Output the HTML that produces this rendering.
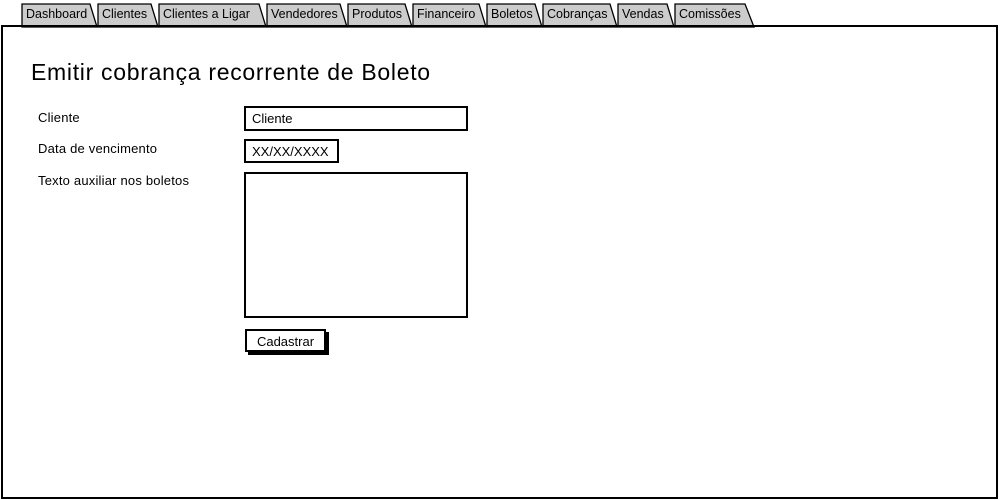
<!DOCTYPE html>
<html><head><meta charset="utf-8"><style>
body{margin:0;width:1000px;height:500px;background:#fff;position:relative;overflow:hidden;font-family:"Liberation Sans",sans-serif;color:#000}
.a{position:absolute}
.lbl{font-size:13px;letter-spacing:0.2px}
.box{border:2px solid #000;box-sizing:border-box;background:#fff;font-size:13px}
</style></head><body>
<svg class="a" style="left:0;top:0" width="1000" height="500">
<rect x="2" y="26" width="995" height="472" fill="#fff" stroke="#000" stroke-width="2"/>
<g fill="#ccc" stroke="#000" stroke-width="1.3">
<path d="M22 27V4H90L97 27Z"/>
<path d="M98 27V4H151L158 27Z"/>
<path d="M159 27V4H259L266 27Z"/>
<path d="M267 27V4H340L347 27Z"/>
<path d="M348 27V4H405L412 27Z"/>
<path d="M413 27V4H479L486 27Z"/>
<path d="M487 27V4H535L542 27Z"/>
<path d="M543 27V4H610L617 27Z"/>
<path d="M618 27V4H667L674 27Z"/>
<path d="M675 27V4H745L754 27Z"/>
</g>
<line x1="2" y1="26" x2="998" y2="26" stroke="#000" stroke-width="2"/>
<g font-family="Liberation Sans" font-size="12.5">
<text x="26" y="18">Dashboard</text>
<text x="102" y="18">Clientes</text>
<text x="163" y="18">Clientes a Ligar</text>
<text x="271" y="18">Vendedores</text>
<text x="352" y="18">Produtos</text>
<text x="417" y="18">Financeiro</text>
<text x="491" y="18">Boletos</text>
<text x="547" y="18">Cobranças</text>
<text x="622" y="18">Vendas</text>
<text x="679" y="18">Comissões</text>
</g>
</svg>
<div class="a" style="left:31px;top:59px;font-size:23px;letter-spacing:0.7px">Emitir cobrança recorrente de Boleto</div>
<div class="a lbl" style="left:38px;top:110px">Cliente</div>
<div class="a lbl" style="left:38px;top:141px">Data de vencimento</div>
<div class="a lbl" style="left:38px;top:173px">Texto auxiliar nos boletos</div>
<div class="a box" style="left:244px;top:106px;width:224px;height:25px;padding:3px 0 0 6px">Cliente</div>
<div class="a box" style="left:244px;top:139px;width:95px;height:24px;padding:3px 0 0 6px">XX/XX/XXXX</div>
<div class="a box" style="left:244px;top:172px;width:224px;height:146px"></div>
<div class="a box" style="left:245px;top:329px;width:81px;height:23px;text-align:center;padding-top:3px;box-shadow:3px 3px 0 #000">Cadastrar</div>
</body></html>
